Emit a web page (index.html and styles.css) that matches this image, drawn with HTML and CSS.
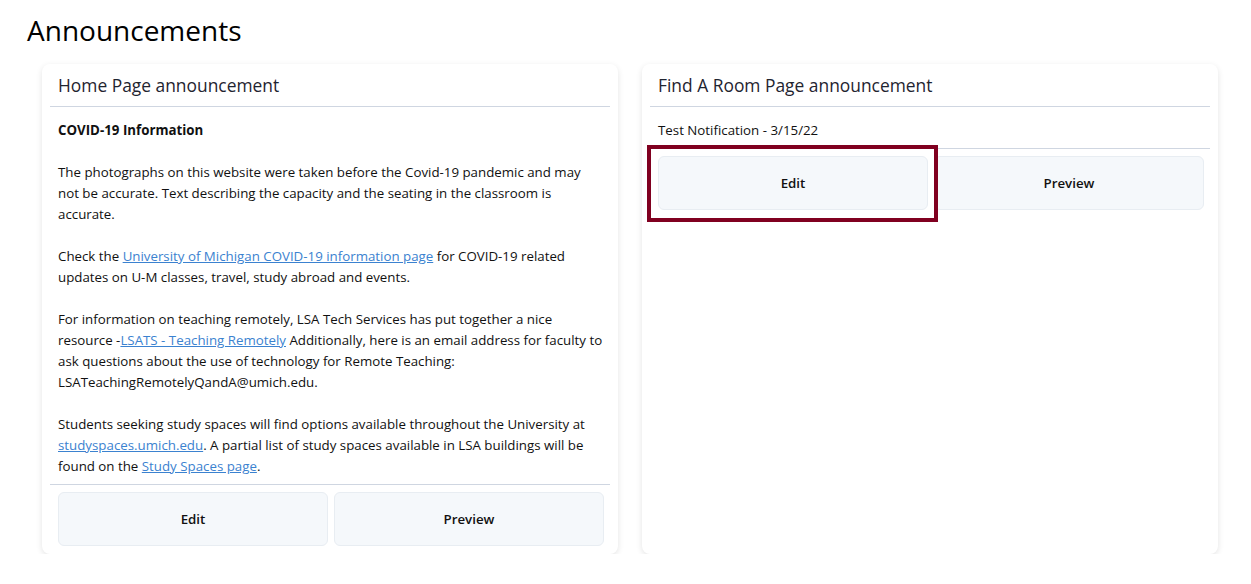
FILE: index.html
```html
<!DOCTYPE html>
<html>
<head>
<meta charset="utf-8">
<link rel="stylesheet" href="styles.css">
</head>
<body>
<h1 class="page-title">Announcements</h1>
<div class="cards">
  <section class="card">
    <h2 class="card-title">Home Page announcement</h2>
    <div class="card-body">
      <p><strong>COVID-19 Information</strong></p>
      <p>The photographs on this website were taken before the Covid-19 pandemic and may not be accurate. Text describing the capacity and the seating in the classroom is accurate.</p>
      <p>Check the <a href="#">University of Michigan COVID-19 information page</a> for COVID-19 related updates on U-M classes, travel, study abroad and events.</p>
      <p>For information on teaching remotely, LSA Tech Services has put together a nice resource -<a href="#">LSATS - Teaching Remotely</a> Additionally, here is an email address for faculty to ask questions about the use of technology for Remote Teaching: LSATeachingRemotelyQandA@umich.edu.</p>
      <p>Students seeking study spaces will find options available throughout the University at <a href="#">studyspaces.umich.edu</a>. A partial list of study spaces available in LSA buildings will be found on the <a href="#">Study Spaces page</a>.</p>
    </div>
    <div class="actions">
      <button class="btn">Edit</button>
      <button class="btn">Preview</button>
    </div>
  </section>
  <section class="card">
    <h2 class="card-title">Find A Room Page announcement</h2>
    <div class="card-body">
      <p>Test Notification - 3/15/22</p>
    </div>
    <div class="actions">
      <button class="btn btn-highlight">Edit</button>
      <button class="btn">Preview</button>
    </div>
  </section>
</div>
</body>
</html>
```
FILE: styles.css
```css
html, body {
  margin: 0;
  padding: 0;
  background: #ffffff;
}
body {
  font-family: "Open Sans", "Noto Sans", sans-serif;
  color: #111;
  padding: 12px 33px 0 42px;
}
.page-title {
  font-weight: 400;
  font-size: 28px;
  line-height: 36px;
  margin: 0 0 16px -15px;
  color: #000;
}
.cards {
  display: grid;
  grid-template-columns: 576px 576px;
  column-gap: 24px;
  align-items: stretch;
}
.card {
  background: #fff;
  border-radius: 8px;
  box-shadow: 0 2px 6px rgba(0,0,0,0.11);
  padding: 0 8px 8px;
  display: flex;
  flex-direction: column;
}
.card-title {
  font-size: 17.4px;
  font-weight: 500;
  color: #1f2430;
  margin: 0;
  padding: 8px 8px 0;
  height: 34px;
  line-height: 26px;
  border-bottom: 1px solid #cfd6e1;
}
.card-body {
  padding: 13px 6px 7px 8px;
  font-size: 13.3px;
  line-height: 21px;
  border-bottom: 1px solid #cfd6e1;
}
.card-body p {
  margin: 0 0 21px;
}
.card-body p:last-child {
  margin-bottom: 0;
}
.card-body strong {
  font-weight: 700;
}
.card-body a {
  color: #3b82d0;
  text-decoration: underline;
}
.actions {
  display: flex;
  gap: 6px;
  padding: 7px 6px 0 8px;
}
.btn {
  flex: 1;
  height: 54px;
  background: #f5f8fb;
  border: 1px solid #e8edf2;
  border-radius: 6px;
  font-family: "Open Sans", "Noto Sans", sans-serif;
  font-size: 13.3px;
  font-weight: 600;
  color: #111;
}
.btn-highlight {
  position: relative;
}
.btn-highlight::after {
  content: "";
  position: absolute;
  top: -12px;
  bottom: -13px;
  left: -12px;
  right: -11px;
  border: 4px solid #800020;
}
```
